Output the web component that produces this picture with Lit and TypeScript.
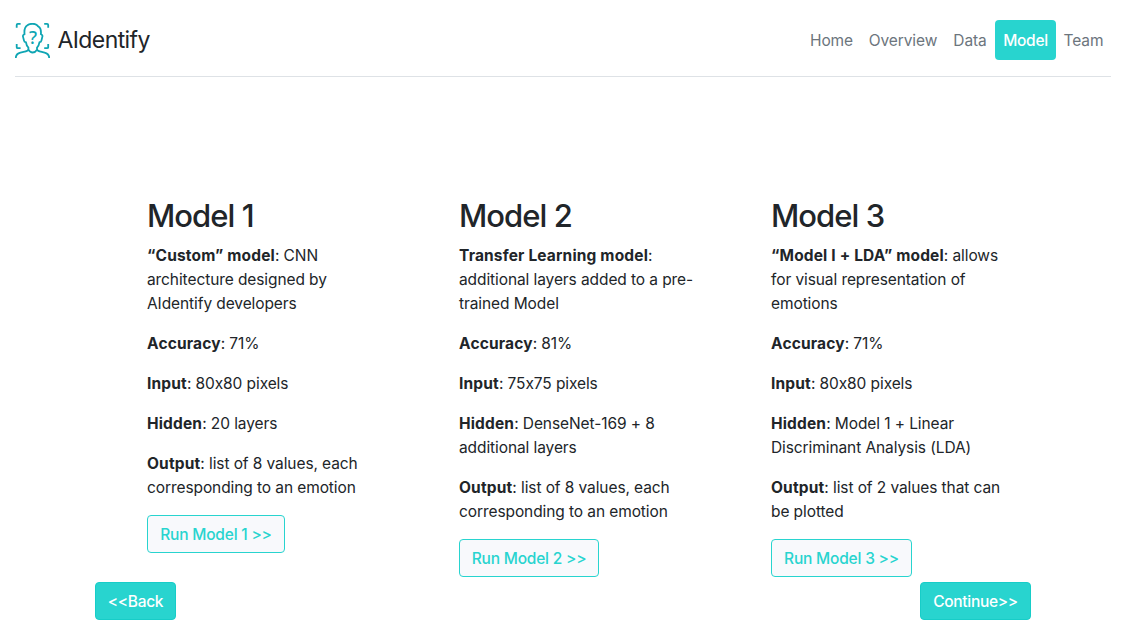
import { LitElement, html, css, svg } from "lit";
import { customElement, property } from "lit/decorators.js";
import { styleMap } from "lit/directives/style-map.js";

interface Fact {
  label: string;
  lines: string[];
}
interface Model {
  title: string;
  facts: Fact[];
  action: string;
  actionWidth: number;
}

const models: Model[] = [
  {
    title: "Model 1",
    facts: [
      { label: "“Custom” model", lines: [": CNN", "architecture designed by", "AIdentify developers"] },
      { label: "Accuracy", lines: [": 71%"] },
      { label: "Input", lines: [": 80x80 pixels"] },
      { label: "Hidden", lines: [": 20 layers"] },
      { label: "Output", lines: [": list of 8 values, each", "corresponding to an emotion"] },
    ],
    action: "Run Model 1 >>",
    actionWidth: 138,
  },
  {
    title: "Model 2",
    facts: [
      { label: "Transfer Learning model", lines: [":", "additional layers added to a pre-", "trained Model"] },
      { label: "Accuracy", lines: [": 81%"] },
      { label: "Input", lines: [": 75x75 pixels"] },
      { label: "Hidden", lines: [": DenseNet-169 + 8", "additional layers"] },
      { label: "Output", lines: [": list of 8 values, each", "corresponding to an emotion"] },
    ],
    action: "Run Model 2 >>",
    actionWidth: 140,
  },
  {
    title: "Model 3",
    facts: [
      { label: "“Model I + LDA” model", lines: [": allows", "for visual representation of", "emotions"] },
      { label: "Accuracy", lines: [": 71%"] },
      { label: "Input", lines: [": 80x80 pixels"] },
      { label: "Hidden", lines: [": Model 1 + Linear", "Discriminant Analysis (LDA)"] },
      { label: "Output", lines: [": list of 2 values that can", "be plotted"] },
    ],
    action: "Run Model 3 >>",
    actionWidth: 141,
  },
];

const logo = svg`
  <g fill="none" stroke="#0ea5b3" stroke-width="1.8" stroke-linejoin="round">
    <path d="M1.7 4.8V2Q1.7.9 2.8.9H5.6M29.2.9H32Q33.2.9 33.2 2V4.8M1.7 21V24.2Q1.7 25.2 2.8 25.2H5.6M29.2 25.2H32Q33.2 25.2 33.2 24.2V21"/>
    <path d="M9.6 11.6C8.5 11.4 7.7 12.2 8 13.6L9 17.6C9.3 18.9 10 19.3 10.9 19.2C11.2 21.4 12 23.2 13.4 24.6V26.2C13.4 27.8 11.8 28.1 9.6 28.6L5.4 29.6C2 30.5.8 32.3.8 35M25.8 11.6C26.9 11.4 27.7 12.2 27.4 13.6L26.4 17.6C26.1 18.9 25.4 19.3 24.5 19.2C24.2 21.4 23.4 23.2 22 24.6V26.2C22 27.8 23.6 28.1 25.8 28.6L29.6 29.6C33 30.5 34.2 32.3 34.2 35"/>
    <path d="M9.6 11.8C9 7 9.8 3.7 12.4 2.2C15.2.3 19.6.4 21.8 1.9C22.5 2.4 22.6 3 23.4 3.5C25.8 4.8 26.3 8 25.8 11.8M13.4 26.8C14.5 28.6 16 29.5 17.7 29.5S20.9 28.6 22 26.8"/>
  </g>
  <text class="mark" x="17.8" y="20.8" text-anchor="middle">?</text>`;

@customElement("model-card")
class ModelCard extends LitElement {
  @property({ attribute: false }) model!: Model;

  static styles = css`
    :host { display: block; }
    .title { margin: -1px 0 9px; font-size: 31px; line-height: 38px; font-weight: 550; letter-spacing: -0.95px; white-space: nowrap; }
    .fact { margin: 0 0 16px; line-height: 24px; letter-spacing: -0.09px; white-space: nowrap; }
    .label { font-weight: 700; letter-spacing: 0.16px; }
    .run {
      box-sizing: border-box; height: 38px; margin-top: -1px; padding: 1px 0 0; font: inherit; font-weight: 450; letter-spacing: -0.2px;
      color: #28d4cf; background: #f8f9fc; border: 1px solid #28d4cf; border-radius: 4px; white-space: nowrap; display: block;
    }
  `;

  render() {
    return html`
      <h2 class="title">${this.model.title}</h2>
      ${this.model.facts.map(
        (f) => html`<p class="fact"><strong class="label">${f.label}</strong>${f.lines.map((l, i) => (i ? html`<br />${l}` : l))}</p>`
      )}
      <button class="run" style=${styleMap({ width: `${this.model.actionWidth}px` })}>${this.model.action}</button>
    `;
  }
}

@customElement("app-root")
class AppRoot extends LitElement {
  static styles = css`
    :host {
      display: block; height: 628px; overflow: hidden; background: #fff; color: #212529;
      font-family: Inter, "Liberation Sans", sans-serif; font-size: 15.5px; line-height: 24px;
    }
    .header {
      box-sizing: border-box; width: 1096px; height: 77px; margin-left: 15px; padding: 20px 0 16px;
      display: flex; justify-content: space-between; border-bottom: 1px solid #dee2e6;
    }
    .brand { display: flex; align-items: center; gap: 7.5px; font-size: 23px; letter-spacing: -0.6px; }
    .logo { width: 35px; height: 35px; display: block; }
    .mark { font: 500 18px "Noto Sans", sans-serif; fill: #0ea5b3; }
    .nav { display: grid; grid-template-columns: 59px 84px 50px 61px 55px; height: 40px; }
    .link {
      box-sizing: border-box; padding-top: 2px; display: flex; align-items: center; justify-content: center;
      border-radius: 4px; color: #6c757d; letter-spacing: -0.08px;
    }
    .active { color: #fff; background: #28d4cf; font-weight: 500; letter-spacing: -0.3px; }
    .content { width: 936px; margin-left: 95px; padding-top: 121px; }
    .models { display: grid; grid-template-columns: repeat(3, 1fr); height: 384px; }
    .card { padding-left: 52px; }
    .pager { display: flex; justify-content: space-between; }
    .page {
      box-sizing: border-box; height: 38px; padding: 1px 0 0; font: inherit; font-weight: 500; letter-spacing: -0.3px;
      color: #fff; background: #28d4cf; border: 1px solid #17cdc8; border-radius: 4px;
    }
    .back { width: 81px; }
    .next { width: 111px; }
  `;

  render() {
    return html`
      <header class="header">
        <div class="brand">
          <svg class="logo" viewBox="0 0 35 35">${logo}</svg>
          <span>AIdentify</span>
        </div>
        <nav class="nav">
          ${["Home", "Overview", "Data", "Model", "Team"].map(
            (n) => html`<a class="link ${n === "Model" ? "active" : ""}">${n}</a>`
          )}
        </nav>
      </header>
      <main class="content">
        <div class="models">${models.map((m) => html`<model-card class="card" .model=${m}></model-card>`)}</div>
        <div class="pager">
          <button class="page back">&lt;&lt;Back</button>
          <button class="page next">Continue&gt;&gt;</button>
        </div>
      </main>
    `;
  }
}
